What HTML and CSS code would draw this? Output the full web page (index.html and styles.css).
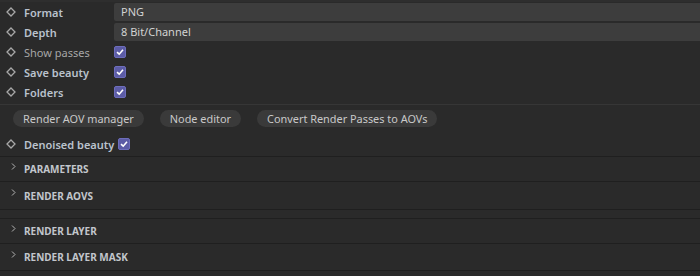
FILE: index.html
```html
<!DOCTYPE html>
<html lang="en">
<head>
    <meta charset="UTF-8">
    <title>Render settings</title>
    <link rel="stylesheet" href="styles.css">
</head>
<body>
    <div class="panel">
        <!-- save options -->
        <div class="params">
            <div class="row">
                <span class="key"><svg width="10" height="10" viewBox="0 0 10 10"><polygon points="5,1 9,5 5,9 1,5"/></svg></span>
                <span class="label">Format</span>
                <div class="field">PNG</div>
            </div>
            <div class="row">
                <span class="key"><svg width="10" height="10" viewBox="0 0 10 10"><polygon points="5,1 9,5 5,9 1,5"/></svg></span>
                <span class="label">Depth</span>
                <div class="field">8 Bit/Channel</div>
            </div>
            <div class="row">
                <span class="key"><svg width="10" height="10" viewBox="0 0 10 10"><polygon points="5,1 9,5 5,9 1,5"/></svg></span>
                <span class="label dim">Show passes</span>
                <span class="check"><svg width="8" height="8" viewBox="0 0 8 8"><polyline points="1,4.2 3.2,6.2 7,1.8"/></svg></span>
            </div>
            <div class="row">
                <span class="key"><svg width="10" height="10" viewBox="0 0 10 10"><polygon points="5,1 9,5 5,9 1,5"/></svg></span>
                <span class="label">Save beauty</span>
                <span class="check"><svg width="8" height="8" viewBox="0 0 8 8"><polyline points="1,4.2 3.2,6.2 7,1.8"/></svg></span>
            </div>
            <div class="row">
                <span class="key"><svg width="10" height="10" viewBox="0 0 10 10"><polygon points="5,1 9,5 5,9 1,5"/></svg></span>
                <span class="label">Folders</span>
                <span class="check"><svg width="8" height="8" viewBox="0 0 8 8"><polyline points="1,4.2 3.2,6.2 7,1.8"/></svg></span>
            </div>
        </div>

        <!-- aov buttons -->
        <div class="actions">
            <div class="buttons">
                <button class="pill">Render AOV manager</button>
                <button class="pill">Node editor</button>
                <button class="pill">Convert Render Passes to AOVs</button>
            </div>
            <div class="row inline">
                <span class="key"><svg width="10" height="10" viewBox="0 0 10 10"><polygon points="5,1 9,5 5,9 1,5"/></svg></span>
                <span class="label">Denoised beauty</span>
                <span class="check"><svg width="8" height="8" viewBox="0 0 8 8"><polyline points="1,4.2 3.2,6.2 7,1.8"/></svg></span>
            </div>
        </div>

        <!-- collapsed groups -->
        <div class="group">
            <div class="section s1"><span class="chev"><svg width="5" height="7" viewBox="0 0 5 7"><polyline points="1,0.5 4,3.5 1,6.5"/></svg></span>PARAMETERS</div>
            <div class="section s2"><span class="chev"><svg width="5" height="7" viewBox="0 0 5 7"><polyline points="1,0.5 4,3.5 1,6.5"/></svg></span>RENDER AOVS</div>
        </div>
        <div class="group">
            <div class="section s3"><span class="chev"><svg width="5" height="7" viewBox="0 0 5 7"><polyline points="1,0.5 4,3.5 1,6.5"/></svg></span>RENDER LAYER</div>
            <div class="section s4"><span class="chev"><svg width="5" height="7" viewBox="0 0 5 7"><polyline points="1,0.5 4,3.5 1,6.5"/></svg></span>RENDER LAYER MASK</div>
        </div>
    </div>
</body>
</html>
```

FILE: styles.css
```css
html, body {
    margin: 0;
    padding: 0;
    background: #2a2a2a;
    font-family: "Noto Sans", "Open Sans", sans-serif;
    font-size: 11px;
    overflow: hidden;
}

.panel {
    width: 700px;
    height: 276px;
    background: #2a2a2a;
    border-top: 2px solid #2e2e2e;
    box-sizing: border-box;
}

.params {
    padding-bottom: 2px;
    border-bottom: 1px solid #363636;
}

.row {
    display: flex;
    align-items: center;
    height: 20px;
}

.key {
    width: 24px;
    display: flex;
    justify-content: center;
    box-sizing: border-box;
    padding-left: 1px;
    padding-right: 3px;
}

.key svg polygon {
    fill: none;
    stroke: #a8a8a8;
    stroke-width: 1.3;
}

.label {
    width: 90px;
    color: #bac2cd;
    font-weight: 600;
    white-space: nowrap;
}

.label.dim {
    color: #a6a6a6;
    font-weight: 400;
}

.field {
    flex: 1;
    height: 18px;
    line-height: 18px;
    background: #3d3d3d;
    border-radius: 2px 0 0 2px;
    color: #d2d2d2;
    padding-left: 7px;
}

.check {
    width: 12px;
    height: 12px;
    background: #5c5ca6;
    border: 1px solid #6d6dbb;
    border-radius: 2px;
    box-sizing: border-box;
    display: flex;
    align-items: center;
    justify-content: center;
}

.check svg polyline {
    fill: none;
    stroke: #ffffff;
    stroke-width: 1.6;
}

.actions {
    padding: 5px 0 2px;
    border-bottom: 1px solid #1f1f1f;
}

.buttons {
    display: flex;
    gap: 16px;
    padding-left: 13px;
    margin-bottom: 7px;
}

.pill {
    height: 17px;
    padding: 0 10px;
    border: none;
    border-radius: 9px;
    background: #3a3a3a;
    color: #c9c9c9;
    font-family: inherit;
    font-size: 10.9px;
    line-height: 17px;
}

.row.inline .label {
    width: auto;
    margin-right: 4px;
}

.group + .group {
    margin-top: 8px;
    border-top: 1px solid #1f1f1f;
}

.section {
    display: flex;
    align-items: center;
    height: 24px;
    border-bottom: 1px solid #1f1f1f;
    color: #c2c6cc;
    font-weight: 700;
    font-size: 10px;
}

.section.s2 { height: 27px; }
.section.s4 { height: 26px; }

.chev {
    width: 24px;
    padding-left: 11px;
    box-sizing: border-box;
    display: flex;
    position: relative;
    top: -3px;
}

.chev svg polyline {
    fill: none;
    stroke: #b4b4b4;
    stroke-width: 1;
}
```
